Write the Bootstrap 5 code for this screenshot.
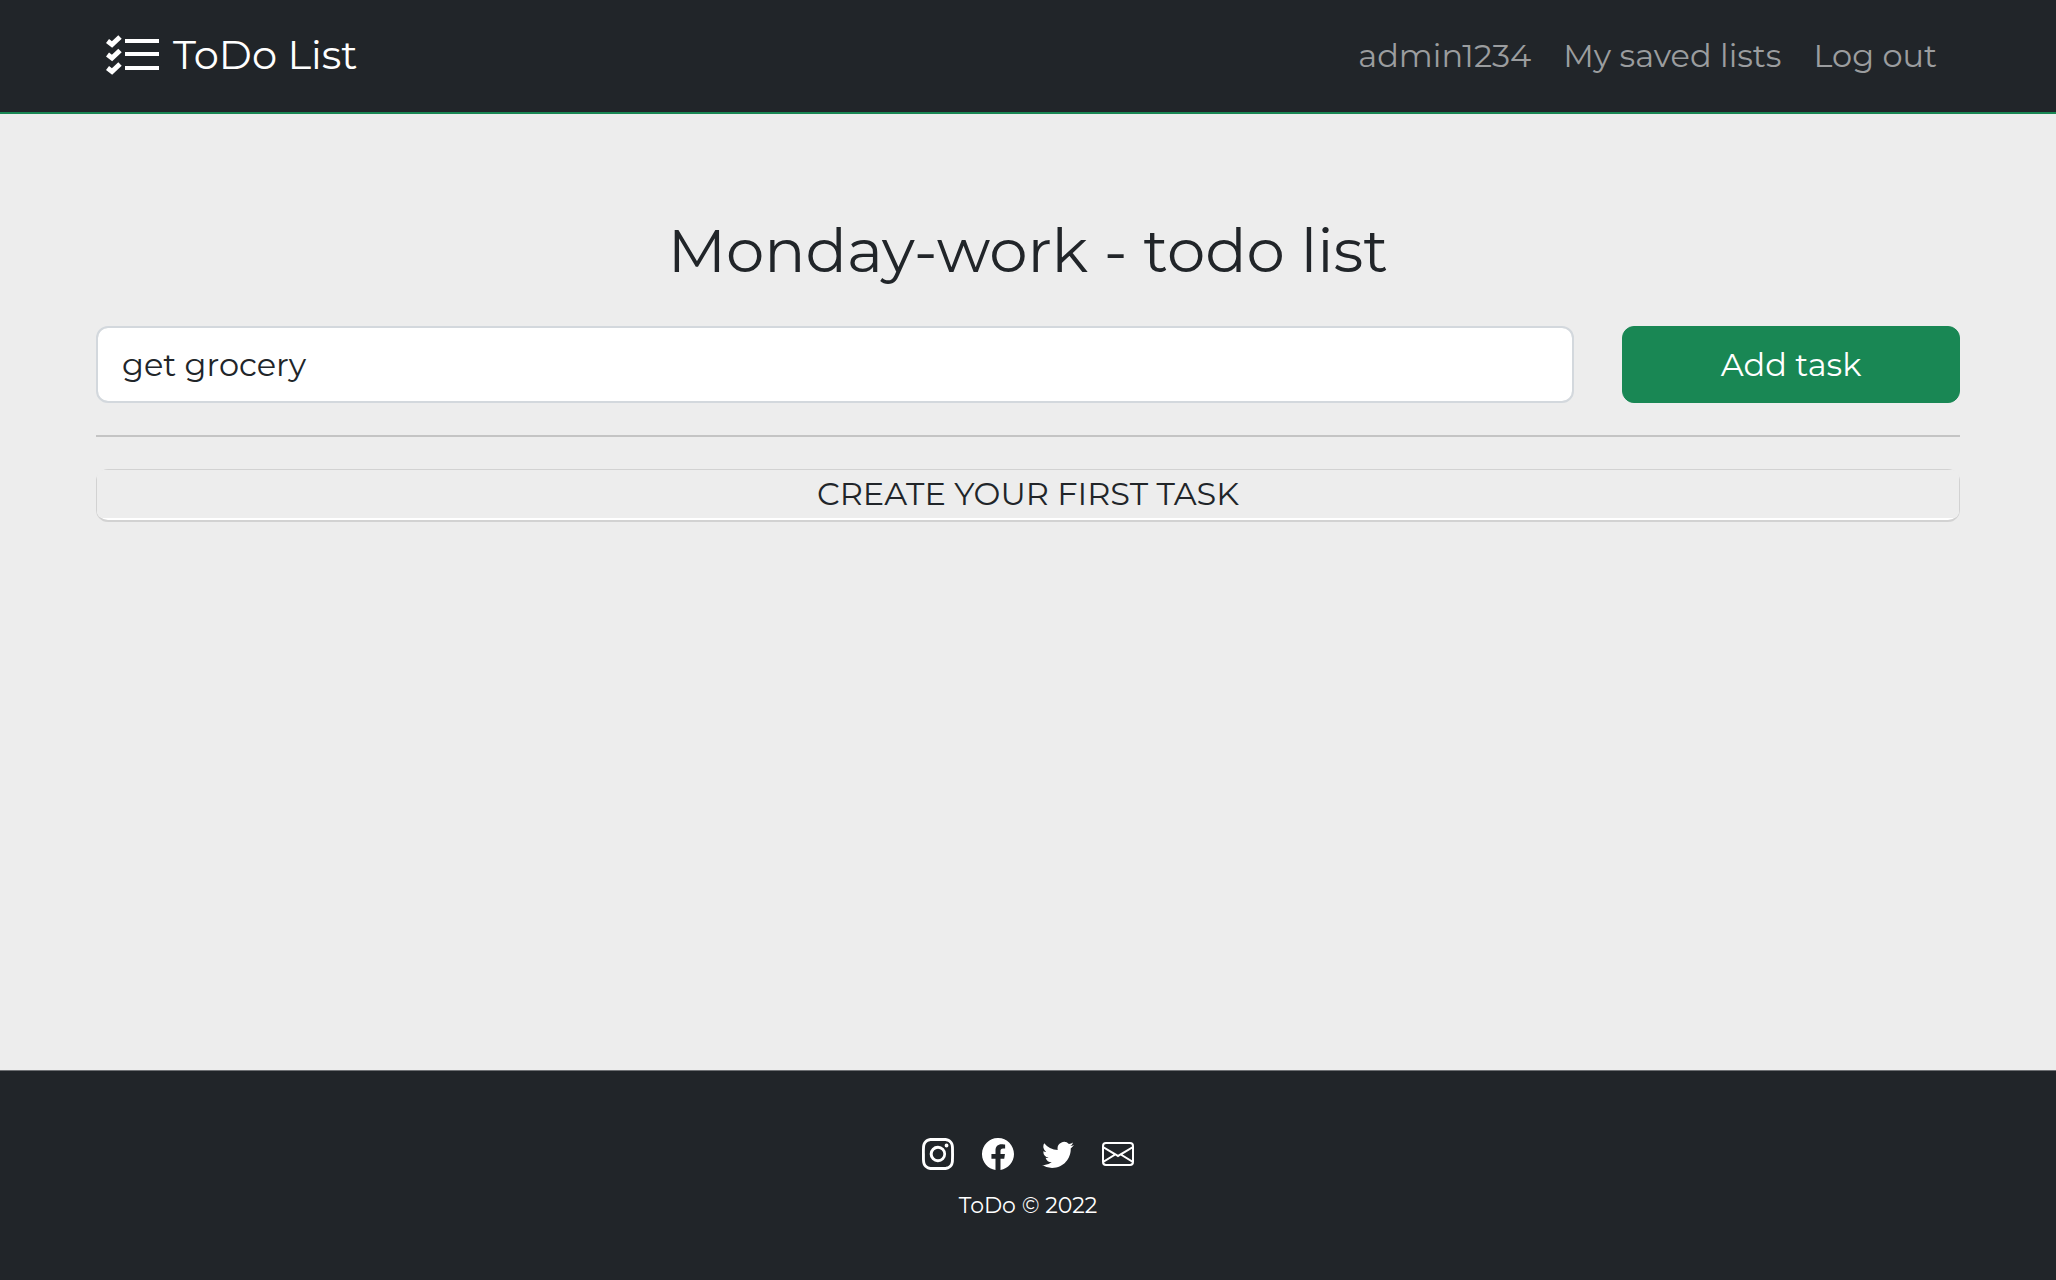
<!DOCTYPE html>
<html lang="en">
<head>
<meta charset="utf-8">
<meta name="viewport" content="width=device-width, initial-scale=1">
<title>ToDo List</title>
<link href="https://cdn.jsdelivr.net/npm/bootstrap@5.3.0/dist/css/bootstrap.min.css" rel="stylesheet">
<style>
  body { font-family: Montserrat, Inter, "Open Sans", sans-serif; font-weight: 400; font-size: 32px; line-height: 48px; color: #212529; background: #ededed; }
  .page-gutter { padding-left: 96px; padding-right: 96px; }
  .site-bar { background: #212529; border-bottom: 2px solid #198754; padding-top: 20px; padding-bottom: 20px; }
  .site-bar .navbar-brand { font-size: 40px; line-height: 60px; padding: 5px 0 7px; margin: 0 0 0 10px; gap: 13px; color: #fff; }
  .site-bar .navbar-nav { gap: 16px; padding-right: 15px; }
  .site-bar .nav-link { color: #9b9d9f; }
  .page-title { font-size: 61px; line-height: 72px; font-weight: 400; margin: 100px 0 40px; }
  .task-form { gap: 48px; }
  .task-form .form-control { font: inherit; padding: 13px 24px 12px; border: 2px solid #d3d8dd; border-radius: 12px; }
  .task-form .btn { font: inherit; width: 338px; border-radius: 12px; background: #198754; border-color: #198754; }
  .rule { height: 2px; margin: 32px 0; border: 0; background: #c4c4c4; opacity: 1; }
  .task-box { border: 1px solid #d2d2d2; border-bottom-width: 2px; border-radius: 12px; background: #fff; }
  .task-box .list-group-item { padding: 0; border: 0; border-radius: 6px; background: #ededed; color: #212529; line-height: 48px; margin-bottom: 2px; }
  .site-foot { background: #212529; border-top: 1px solid #6e7073; padding-top: 67px; padding-bottom: 58px; font-size: 22px; line-height: 32px; }
  .social { gap: 28px; margin-bottom: 20px; }
  .social a { color: #fff; display: block; line-height: 0; }
</style>
<script src="https://cdn.jsdelivr.net/npm/bootstrap@5.3.0/dist/js/bootstrap.bundle.min.js"></script>
</head>
<body class="d-flex flex-column min-vh-100">
<header>
  <nav class="navbar navbar-expand navbar-dark site-bar page-gutter">
    <a class="navbar-brand d-flex align-items-center" href="#">
      <svg width="54" height="42" viewBox="0 0 54 42" fill="none" stroke="#fff" aria-hidden="true">
        <path stroke-width="4" d="M19 7h34M19 20h34M19 34h34"/>
        <path stroke-width="5" d="m1.500 7 4.500 3.500L14 3M1.500 20.500 6 24l8-7.500M1.500 34 6 37.500 14 30"/>
      </svg>
      <span>ToDo List</span>
    </a>
    <div class="navbar-nav ms-auto">
      <a class="nav-link" href="#">admin1234</a>
      <a class="nav-link" href="#">My saved lists</a>
      <a class="nav-link" href="#">Log out</a>
    </div>
  </nav>
</header>
<main class="flex-grow-1 page-gutter">
  <h1 class="page-title text-center">Monday-work - todo list</h1>
  <form class="d-flex task-form">
    <input class="form-control flex-grow-1" id="task" type="text" aria-label="Task" value="get grocery">
    <button class="btn btn-success flex-shrink-0" type="button">Add task</button>
  </form>
  <hr class="rule">
  <div class="task-box">
    <ul class="list-group text-center">
      <li class="list-group-item">CREATE YOUR FIRST TASK</li>
    </ul>
  </div>
</main>
<footer class="site-foot text-white text-center">
  <div class="d-flex justify-content-center social">
    <a href="#" aria-label="Instagram"><svg width="32" height="32" viewBox="0 0 16 16" fill="currentColor"><path d="M8 0C5.829 0 5.556.01 4.703.048 3.850.088 3.269.222 2.760.420a3.917 3.917 0 0 0-1.417.923A3.927 3.927 0 0 0 .420 2.760C.222 3.268.087 3.850.048 4.700.010 5.555 0 5.827 0 8.001c0 2.172.010 2.444.048 3.297.040.852.174 1.433.372 1.942.205.526.478.972.923 1.417.444.445.890.719 1.416.923.510.198 1.090.333 1.942.372C5.555 15.990 5.827 16 8 16s2.444-.010 3.298-.048c.851-.040 1.434-.174 1.943-.372a3.916 3.916 0 0 0 1.416-.923c.445-.445.718-.891.923-1.417.197-.509.332-1.090.372-1.942C15.990 10.445 16 10.173 16 8s-.010-2.445-.048-3.299c-.040-.851-.175-1.433-.372-1.941a3.926 3.926 0 0 0-.923-1.417A3.911 3.911 0 0 0 13.240.420c-.510-.198-1.092-.333-1.943-.372C10.443.010 10.172 0 7.998 0h.003zm-.717 1.442h.718c2.136 0 2.389.007 3.232.046.780.035 1.204.166 1.486.275.373.145.640.319.920.599.280.280.453.546.598.920.110.281.240.705.275 1.485.039.843.047 1.096.047 3.231s-.008 2.389-.047 3.232c-.035.780-.166 1.203-.275 1.485a2.470 2.470 0 0 1-.599.919c-.280.280-.546.453-.920.598-.280.110-.704.240-1.485.276-.843.038-1.096.047-3.232.047s-2.390-.009-3.233-.047c-.780-.036-1.203-.166-1.485-.276a2.478 2.478 0 0 1-.920-.598 2.480 2.480 0 0 1-.600-.920c-.109-.281-.240-.705-.275-1.485-.038-.843-.046-1.096-.046-3.233 0-2.136.008-2.388.046-3.231.036-.780.166-1.204.276-1.486.145-.373.319-.640.599-.920.280-.280.546-.453.920-.598.282-.110.705-.240 1.485-.276.738-.034 1.024-.044 2.515-.045v.002zm4.988 1.328a.960.960 0 1 0 0 1.920.960.960 0 0 0 0-1.920zm-4.270 1.122a4.109 4.109 0 1 0 0 8.217 4.109 4.109 0 0 0 0-8.217zm0 1.441a2.667 2.667 0 1 1 0 5.334 2.667 2.667 0 0 1 0-5.334z"/></svg></a>
    <a href="#" aria-label="Facebook"><svg width="32" height="32" viewBox="0 0 16 16" fill="currentColor"><path d="M16 8.049c0-4.446-3.582-8.050-8-8.050C3.580 0-.002 3.603-.002 8.050c0 4.017 2.926 7.347 6.750 7.951v-5.625h-2.030V8.050H6.750V6.275c0-2.017 1.195-3.131 3.022-3.131.876 0 1.791.157 1.791.157v1.980h-1.009c-.993 0-1.303.621-1.303 1.258v1.510h2.218l-.354 2.326H9.250V16c3.824-.604 6.750-3.934 6.750-7.951z"/></svg></a>
    <a href="#" aria-label="Twitter"><svg width="32" height="32" viewBox="0 0 16 16" fill="currentColor"><path d="M5.026 15c6.038 0 9.341-5.003 9.341-9.334 0-.140 0-.282-.006-.422A6.685 6.685 0 0 0 16 3.542a6.658 6.658 0 0 1-1.889.518 3.301 3.301 0 0 0 1.447-1.817 6.533 6.533 0 0 1-2.087.793A3.286 3.286 0 0 0 7.875 6.030a9.325 9.325 0 0 1-6.767-3.429 3.289 3.289 0 0 0 1.018 4.382A3.323 3.323 0 0 1 .640 6.575v.045a3.288 3.288 0 0 0 2.632 3.218 3.203 3.203 0 0 1-.865.115 3.230 3.230 0 0 1-.614-.057 3.283 3.283 0 0 0 3.067 2.277A6.588 6.588 0 0 1 .780 13.580a6.320 6.320 0 0 1-.780-.045A9.344 9.344 0 0 0 5.026 15z"/></svg></a>
    <a href="#" aria-label="Email"><svg width="32" height="32" viewBox="0 0 16 16" fill="currentColor"><path d="M0 4a2 2 0 0 1 2-2h12a2 2 0 0 1 2 2v8a2 2 0 0 1-2 2H2a2 2 0 0 1-2-2V4Zm2-1a1 1 0 0 0-1 1v.217l7 4.200 7-4.200V4a1 1 0 0 0-1-1H2Zm13 2.383-4.708 2.825L15 11.105V5.383Zm-.034 6.876-5.640-3.471L8 9.583l-1.326-.795-5.640 3.470A1 1 0 0 0 2 13h12a1 1 0 0 0 .966-.741ZM1 11.105l4.708-2.897L1 5.383v5.722Z"/></svg></a>
  </div>
  <div>ToDo © 2022</div>
</footer>
</body>
</html>
